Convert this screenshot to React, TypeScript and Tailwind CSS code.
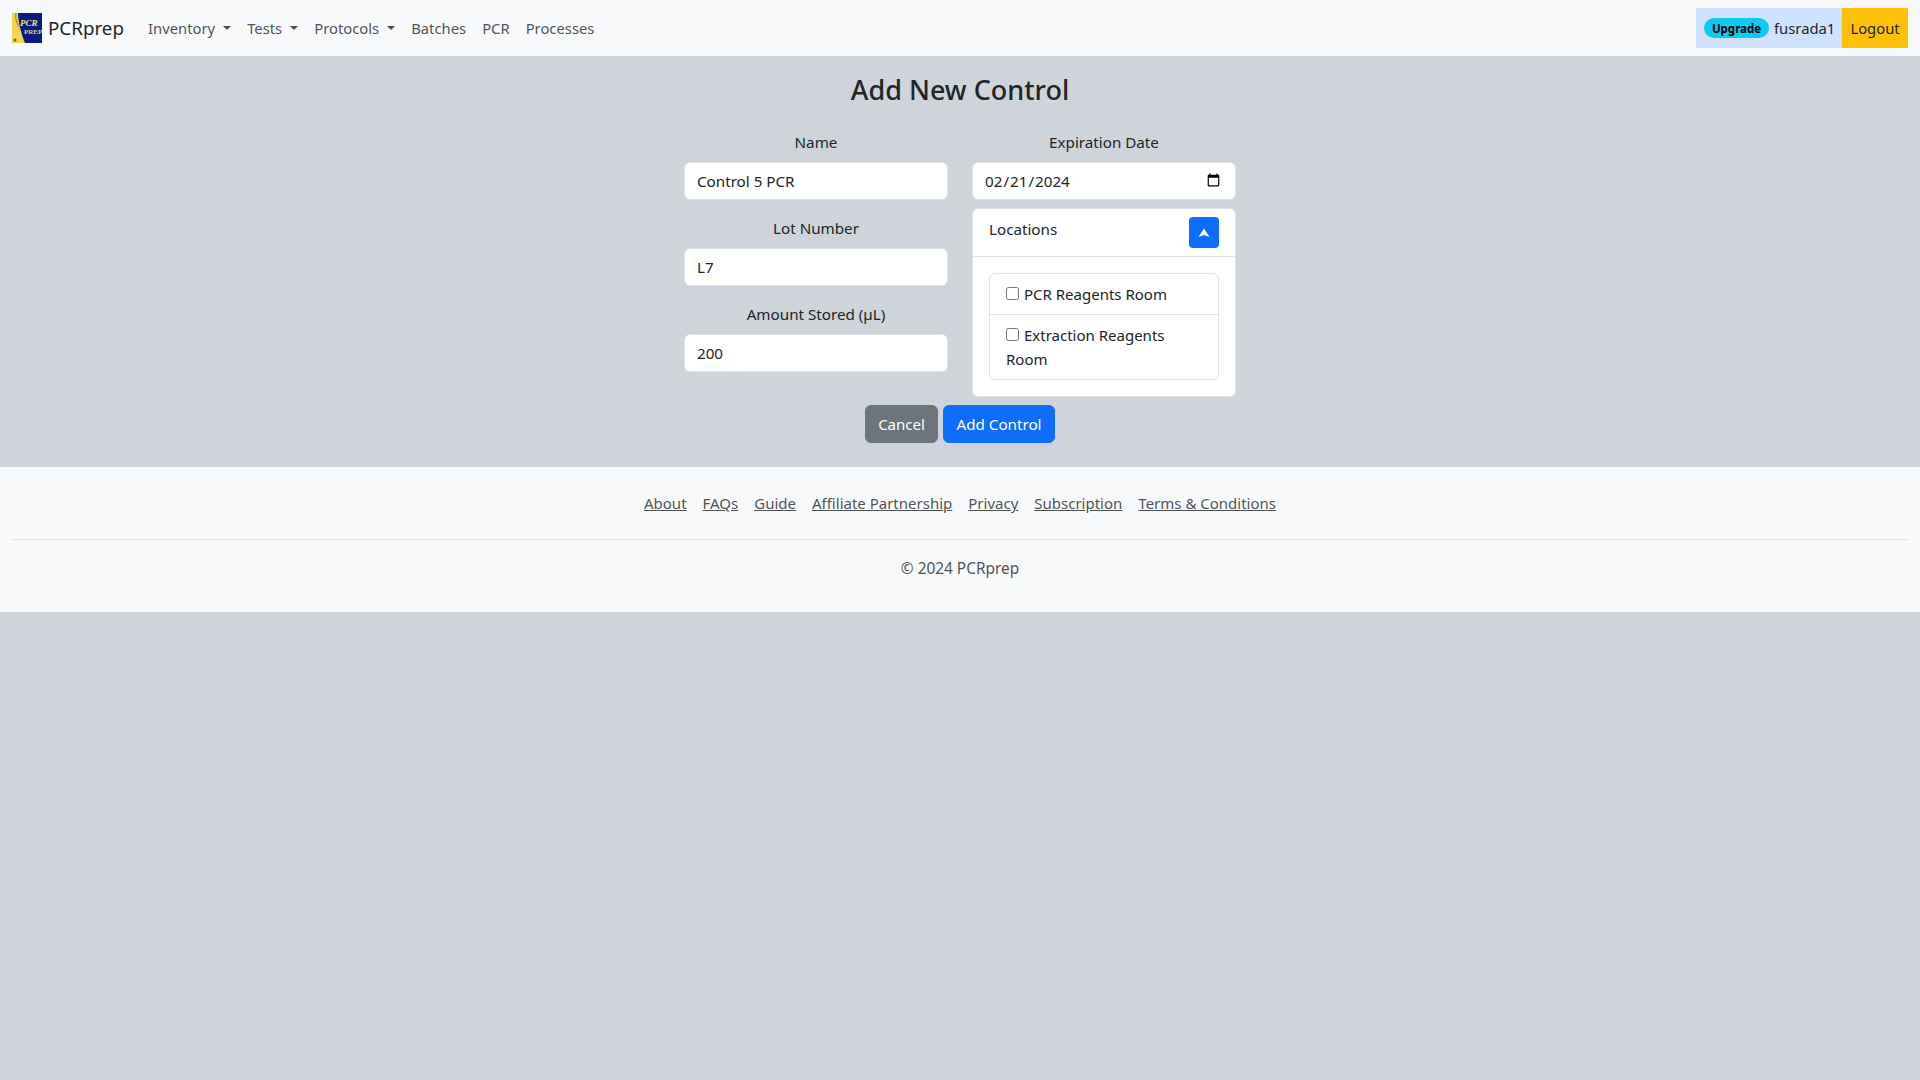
const navLinks = [
  { label: "Inventory", caret: true },
  { label: "Tests", caret: true },
  { label: "Protocols", caret: true },
  { label: "Batches" },
  { label: "PCR" },
  { label: "Processes" },
];

const footerLinks = ["About", "FAQs", "Guide", "Affiliate Partnership", "Privacy", "Subscription", "Terms & Conditions"];

function Logo() {
  return (
    <svg width="30" height="30" viewBox="0 0 30 30" className="shrink-0">
      <rect width="30" height="30" fill="#0b1a80" />
      <path d="M0 0H6C6 8 9 20 13 30H0Z" fill="#f2d44e" />
      <path d="M4 0C3 6 5 10 7 14" stroke="#8a7a30" strokeWidth="1" fill="none" />
      <circle cx="3" cy="27" r="1.5" fill="#6b6430" />
      <text x="8" y="13" fontSize="9" fontWeight="700" fontStyle="italic" fill="#f5e26a" fontFamily="Liberation Serif, serif">PCR</text>
      <text x="12" y="21" fontSize="7" fontWeight="700" fill="#d9cf8a" fontFamily="Liberation Serif, serif">PREP</text>
    </svg>
  );
}

function Field({ label, value }: { label: string; value: string }) {
  return (
    <div className="mb-4">
      <label className="block text-center leading-6 mb-2">{label}</label>
      <input
        readOnly
        value={value}
        className="block w-full h-[38px] rounded-md border border-[#dee2e6] bg-white px-3 text-[#212529] outline-none"
      />
    </div>
  );
}

export default function App() {
  return (
    <div className="min-h-screen bg-[#ced4da] text-[#212529] text-[15.2px] font-['Noto_Sans','Open_Sans',sans-serif]">
      <nav className="h-14 bg-[#f8f9fa] flex items-center justify-between pl-3 pr-3">
        <div className="flex items-center">
          <a className="flex items-center gap-[6px] text-[18.8px] text-[#212529] mr-6">
            <Logo />
            PCRprep
          </a>
          <ul className="flex items-center gap-4 text-[14.8px] text-[#212529cc]">
            {navLinks.map((l) => (
              <li key={l.label} className="flex items-center">
                {l.label}
                {l.caret && <span className="ml-2 border-x-4 border-t-4 border-x-transparent border-t-[#212529cc]" />}
              </li>
            ))}
          </ul>
        </div>
        <div className="flex items-center h-10 text-[14.8px]">
          <div className="h-10 w-[146px] bg-[#cfe2ff] flex items-center gap-[5px] pl-2">
            <span className="rounded-full bg-[#0dcaf0] text-black text-[11.5px] font-bold w-[65px] h-5 flex items-center justify-center pt-px">Upgrade</span>
            <span>fusrada1</span>
          </div>
          <div className="h-10 w-[66px] bg-[#ffc107] flex items-center justify-center text-[#212529]">Logout</div>
        </div>
      </nav>

      <main className="h-[411px] flex flex-col items-center pt-4">
        <h3 className="text-[27px] font-medium leading-9 mb-[22px] text-[#212529]">Add New Control</h3>
        <form className="w-[552px]">
          <div className="grid grid-cols-2 gap-x-6">
            <div>
              <Field label="Name" value="Control 5 PCR" />
              <Field label="Lot Number" value="L7" />
              <Field label="Amount Stored (µL)" value="200" />
            </div>
            <div>
              <div className="mb-2">
                <label className="block text-center leading-6 mb-2">Expiration Date</label>
                <input
                  type="date"
                  defaultValue="2024-02-21"
                  className="block w-full h-[38px] rounded-md border border-[#dee2e6] bg-white pl-[11px] pr-3 text-[#212529] outline-none"
                />
              </div>
              <div className="rounded-md border border-[#dee2e6] bg-white">
                <div className="h-12 border-b border-[#dee2e6] flex items-start justify-between pl-4 pr-4 pt-2">
                  <span className="leading-6">Locations</span>
                  <button type="button" className="w-[30px] h-[31px] rounded bg-[#0d6efd] flex items-center justify-center">
                    <svg width="12" height="10" viewBox="0 0 12 10">
                      <path d="M6 0.5L11.5 9L6 7L0.5 9Z" fill="#fff" />
                    </svg>
                  </button>
                </div>
                <div className="p-4">
                  <ul className="rounded-md border border-[#dee2e6] text-[15px]">
                    <li className="px-4 py-2 leading-6 border-b border-[#dee2e6]">
                      <input type="checkbox" className="mr-[5px] w-[13px] h-[13px]" />
                      PCR Reagents Room
                    </li>
                    <li className="px-4 py-2 leading-6">
                      <input type="checkbox" className="mr-[5px] w-[13px] h-[13px]" />
                      Extraction Reagents Room
                    </li>
                  </ul>
                </div>
              </div>
            </div>
          </div>
          <div className="flex justify-center gap-[5px] mt-2">
            <button type="button" className="h-[38px] w-[73px] rounded-md bg-[#6c757d] text-white text-[15px] border border-[#6c757d]">Cancel</button>
            <button type="button" className="h-[38px] w-[112px] rounded-md bg-[#0d6efd] text-white border border-[#0d6efd]">Add Control</button>
          </div>
        </form>
      </main>

      <footer className="h-[145px] bg-[#f8f9fa] px-3 pt-[24px] text-[#212529cc]">
        <div className="flex justify-center gap-4 text-[15px] leading-6 pb-[24px] border-b border-[#dee2e6]">
          {footerLinks.map((l) => (
            <a key={l} className="underline">{l}</a>
          ))}
        </div>
        <p className="text-center text-[15.4px] leading-6 mt-[17px]">© 2024 PCRprep</p>
      </footer>
    </div>
  );
}
